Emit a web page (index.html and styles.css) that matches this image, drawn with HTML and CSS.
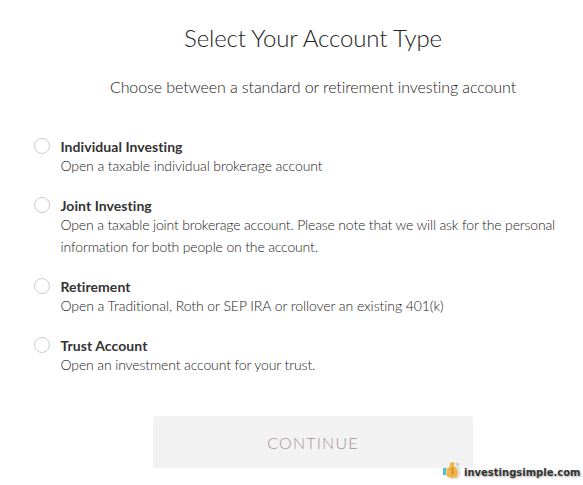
FILE: index.html
```html
<!DOCTYPE html>
<html lang="en">
<head>
    <meta charset="UTF-8">
    <meta name="viewport" content="width=device-width, initial-scale=1.0">
    <title>Select Your Account Type</title>
    <link rel="stylesheet" href="styles.css">
</head>
<body>
    <form class="container">
        <h1>Select Your Account Type</h1>
        <p class="subtitle">Choose between a standard or retirement investing account</p>

        <div class="options">
            <label class="option">
                <input type="radio" name="account" value="individual">
                <span class="option-text">
                    <span class="option-title">Individual Investing</span>
                    <span class="option-desc">Open a taxable individual brokerage account</span>
                </span>
            </label>
            <label class="option">
                <input type="radio" name="account" value="joint">
                <span class="option-text">
                    <span class="option-title">Joint Investing</span>
                    <span class="option-desc desc-joint">Open a taxable joint brokerage account. Please note that we will ask for the personal<br>information for both people on the account.</span>
                </span>
            </label>
            <label class="option">
                <input type="radio" name="account" value="retirement">
                <span class="option-text">
                    <span class="option-title">Retirement</span>
                    <span class="option-desc desc-retirement">Open a Traditional, Roth or SEP IRA or rollover an existing 401(k)</span>
                </span>
            </label>
            <label class="option">
                <input type="radio" name="account" value="trust">
                <span class="option-text">
                    <span class="option-title">Trust Account</span>
                    <span class="option-desc desc-trust">Open an investment account for your trust.</span>
                </span>
            </label>
        </div>

        <button type="button" class="continue-btn">CONTINUE</button>
    </form>

    <div class="watermark">
        <svg class="watermark-icon" width="20" height="20" viewBox="0 0 20 20">
            <path d="M4 15l4 3h8l3-5-1-7-3-3z" fill="#e2e2e2"/>
            <path d="M1 7h4v7H1z" fill="#4fc0d0"/>
            <path d="M4 8l3-2v10l-3-1z" fill="#fbd9a0"/>
            <path d="M8 2l2-1 3 1-1 3 3 3 1 4-1 4-5 1-5-2V9l3-4z" fill="#f3b348"/>
            <path d="M12 8c-1-1-3-1-3 .5s3 1 3 2.500-2 2-3 1M10.500 6.500v7" fill="none" stroke="#d08f2c"/>
            <circle cx="15.500" cy="3" r="1.500" fill="#c3c7c9"/>
        </svg>
        <span>investingsimple.com</span>
    </div>
</body>
</html>
```

FILE: styles.css
```css
body {
    font-family: Lato, sans-serif;
    font-weight: 300;
    font-variant-ligatures: none;
    margin: 0;
    background-color: #fff;
    color: #222;
}
.container {
    display: flex;
    flex-direction: column;
    padding: 23px 0 0 34px;
}
h1 {
    width: 558px;
    margin: 0;
    font-size: 24px;
    font-weight: 300;
    line-height: 30px;
    letter-spacing: -0.13px;
    text-align: center;
}
.subtitle {
    width: 558px;
    margin: 22px 0 0;
    font-size: 16px;
    line-height: 24px;
    letter-spacing: -0.1px;
    text-align: center;
}
.options {
    display: flex;
    flex-direction: column;
    gap: 19px;
    margin-top: 38px;
}
.option {
    display: flex;
    gap: 10.5px;
}
.option input {
    appearance: none;
    flex: none;
    box-sizing: border-box;
    width: 16px;
    height: 16px;
    margin: 1px 0 0;
    border: 1px solid #ccc;
    border-radius: 50%;
}
.option-text {
    display: flex;
    flex-direction: column;
}
.option-title {
    color: #333;
    font-size: 14px;
    font-weight: 700;
    line-height: 19px;
    letter-spacing: 0.06px;
}
.option-desc {
    margin-top: -1px;
    font-size: 14px;
    line-height: 22px;
    letter-spacing: -0.11px;
    white-space: nowrap;
}
.desc-joint {
    letter-spacing: -0.16px;
}
.desc-retirement {
    letter-spacing: -0.07px;
}
.desc-trust {
    letter-spacing: -0.13px;
}
.continue-btn {
    width: 320px;
    height: 52px;
    margin: 40px 0 0 119px;
    padding: 0;
    border: none;
    border-radius: 3px;
    background-color: #f2f2f2;
    color: #a88f96;
    font-family: inherit;
    font-size: 16px;
    font-weight: 300;
    letter-spacing: 1.2px;
}
/* site mark over the corner of the page */
.watermark {
    position: absolute;
    left: 442px;
    top: 461px;
    display: flex;
    align-items: flex-start;
    gap: 2px;
    color: #333;
    font-family: "DejaVu Sans", sans-serif;
    font-size: 10px;
    font-weight: 700;
    line-height: 24px;
    text-shadow: 1px 1px 2px #aaa;
}
```
